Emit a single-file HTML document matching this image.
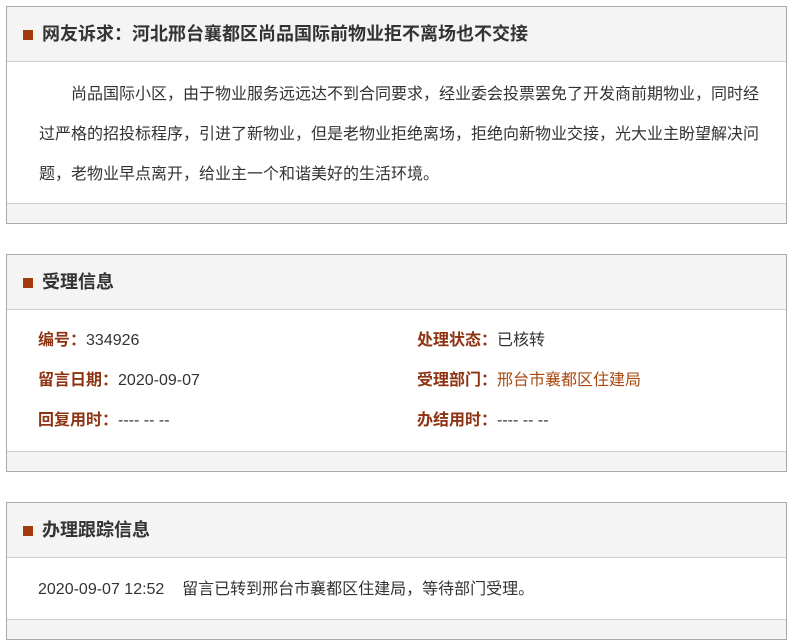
<!DOCTYPE html>
<html><head><meta charset="utf-8"><style>
*{margin:0;padding:0;box-sizing:border-box}
body{width:792px;height:627px;overflow:hidden;background:#fff;font-family:"Liberation Sans","Noto Sans CJK SC",sans-serif;color:#333}
.box{position:absolute;left:6px;width:781px;border:1px solid #aaa;background:#fff}
.hd{height:55px;background:#f4f4f4;border-bottom:1px solid #d0d0d0;position:relative}
.hd i{position:absolute;left:16px;top:23px;width:10px;height:10px;background:#a23a0c}
.hd b{position:absolute;left:35px;top:14px;font-size:18px;line-height:26px;color:#333}
.ft{height:20px;background:#f4f4f4;border-top:1px solid #d0d0d0}
.p{padding:13px 0 8px 32px;width:752px;font-size:16px;line-height:40px;text-indent:32px}
.info{position:relative;height:141px;font-size:16px}
.r{position:absolute;line-height:20px}
.l{color:#8e3413;font-weight:bold}
.o{color:#a9480f}
</style></head><body>
<div class="box" style="top:6px">
 <div class="hd"><i></i><b>网友诉求：河北邢台襄都区尚品国际前物业拒不离场也不交接</b></div>
 <div class="p">尚品国际小区，由于物业服务远远达不到合同要求，经业委会投票罢免了开发商前期物业，同时经过严格的招投标程序，引进了新物业，但是老物业拒绝离场，拒绝向新物业交接，光大业主盼望解决问题，老物业早点离开，给业主一个和谐美好的生活环境。</div>
 <div class="ft"></div>
</div>
<div class="box" style="top:254px">
 <div class="hd"><i></i><b>受理信息</b></div>
 <div class="info">
  <div class="r" style="left:31px;top:21px"><span class="l">编号：</span>334926</div>
  <div class="r" style="left:410px;top:21px"><span class="l">处理状态：</span>已核转</div>
  <div class="r" style="left:31px;top:61px"><span class="l">留言日期：</span>2020-09-07</div>
  <div class="r" style="left:410px;top:61px"><span class="l">受理部门：</span><span class="o">邢台市襄都区住建局</span></div>
  <div class="r" style="left:31px;top:101px"><span class="l">回复用时：</span>---- -- --</div>
  <div class="r" style="left:410px;top:101px"><span class="l">办结用时：</span>---- -- --</div>
 </div>
 <div class="ft"></div>
</div>
<div class="box" style="top:502px">
 <div class="hd"><i></i><b>办理跟踪信息</b></div>
 <div style="height:61px;position:relative;font-size:16px"><div class="r" style="left:31px;top:22px">2020-09-07 12:52&nbsp;&nbsp;&nbsp;&nbsp;留言已转到邢台市襄都区住建局，等待部门受理。</div></div>
 <div class="ft"></div>
</div>
</body></html>
